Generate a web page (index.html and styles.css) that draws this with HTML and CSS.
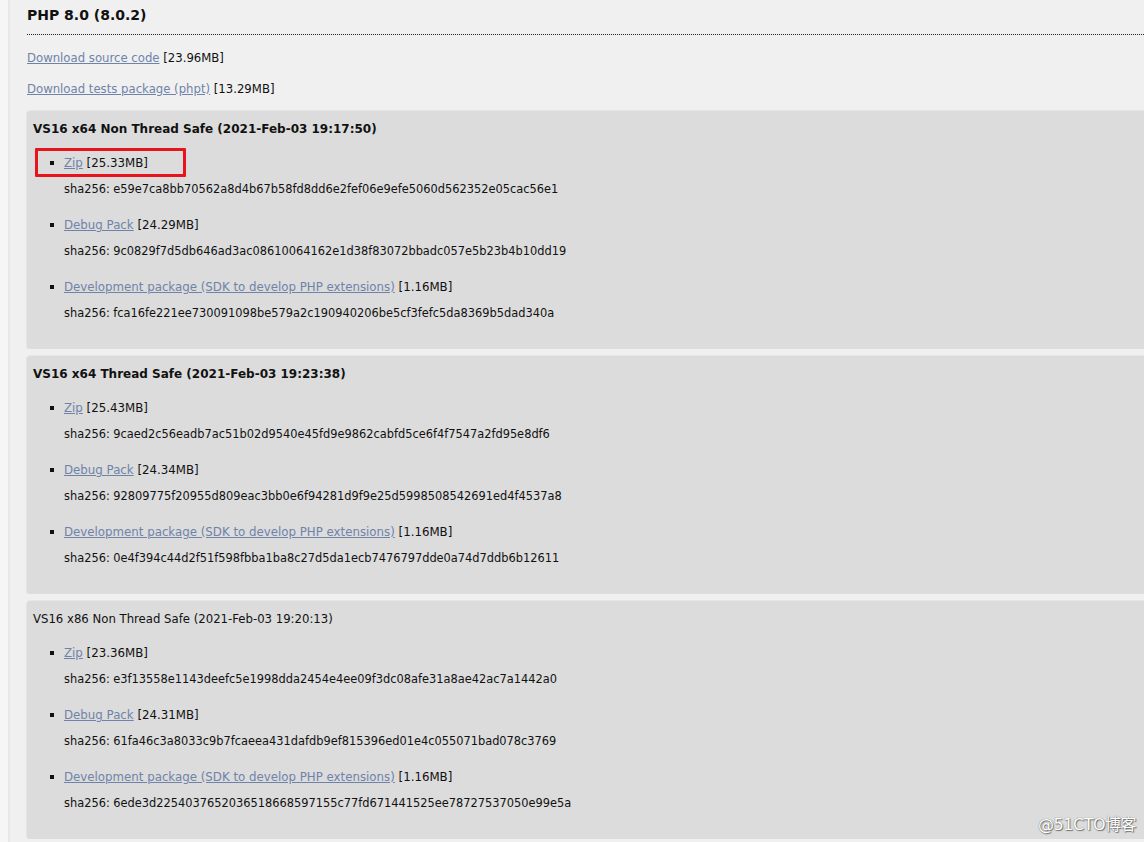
FILE: index.html
```html
<!DOCTYPE html>
<html>
<head>
<meta charset="utf-8">
<link rel="stylesheet" href="styles.css">
</head>
<body>
<div class="page">
  <h3 class="title">PHP 8.0 (8.0.2)</h3>
  <p class="dl"><a href="#">Download source code</a> [23.96MB]</p>
  <p class="dl"><a href="#">Download tests package (phpt)</a> [13.29MB]</p>

  <div class="box">
    <h4 class="box-title">VS16 x64 Non Thread Safe (2021-Feb-03 19:17:50)</h4>
    <ul class="items">
      <li class="item"><span class="mark"></span><a href="#">Zip</a> [25.33MB]
        <p class="sha">sha256: e59e7ca8bb70562a8d4b67b58fd8dd6e2fef06e9efe5060d562352e05cac56e1</p></li>
      <li class="item"><a href="#">Debug Pack</a> [24.29MB]
        <p class="sha">sha256: 9c0829f7d5db646ad3ac08610064162e1d38f83072bbadc057e5b23b4b10dd19</p></li>
      <li class="item"><a href="#">Development package (SDK to develop PHP extensions)</a> [1.16MB]
        <p class="sha">sha256: fca16fe221ee730091098be579a2c190940206be5cf3fefc5da8369b5dad340a</p></li>
    </ul>
  </div>

  <div class="box">
    <h4 class="box-title">VS16 x64 Thread Safe (2021-Feb-03 19:23:38)</h4>
    <ul class="items">
      <li class="item"><a href="#">Zip</a> [25.43MB]
        <p class="sha">sha256: 9caed2c56eadb7ac51b02d9540e45fd9e9862cabfd5ce6f4f7547a2fd95e8df6</p></li>
      <li class="item"><a href="#">Debug Pack</a> [24.34MB]
        <p class="sha">sha256: 92809775f20955d809eac3bb0e6f94281d9f9e25d5998508542691ed4f4537a8</p></li>
      <li class="item"><a href="#">Development package (SDK to develop PHP extensions)</a> [1.16MB]
        <p class="sha">sha256: 0e4f394c44d2f51f598fbba1ba8c27d5da1ecb7476797dde0a74d7ddb6b12611</p></li>
    </ul>
  </div>

  <div class="box">
    <h4 class="box-title plain">VS16 x86 Non Thread Safe (2021-Feb-03 19:20:13)</h4>
    <ul class="items">
      <li class="item"><a href="#">Zip</a> [23.36MB]
        <p class="sha">sha256: e3f13558e1143deefc5e1998dda2454e4ee09f3dc08afe31a8ae42ac7a1442a0</p></li>
      <li class="item"><a href="#">Debug Pack</a> [24.31MB]
        <p class="sha">sha256: 61fa46c3a8033c9b7fcaeea431dafdb9ef815396ed01e4c055071bad078c3769</p></li>
      <li class="item"><a href="#">Development package (SDK to develop PHP extensions)</a> [1.16MB]
        <p class="sha">sha256: 6ede3d2254037652036518668597155c77fd671441525ee78727537050e99e5a</p></li>
    </ul>
  </div>
</div>
<div class="watermark">@51CTO博客</div>
</body>
</html>
```

FILE: styles.css
```css
html, body {
  margin: 0;
  padding: 0;
  height: 100%;
  overflow: hidden;
}
body {
  background: #f0f0f0;
  font-family: "DejaVu Sans", Verdana, sans-serif;
  font-size: 11.4px;
  line-height: 16px;
  color: #111;
  position: relative;
  border-left: 8px solid #f6f6f6;
  box-shadow: inset 2px 0 0 #e8e8e8;
}
.page {
  padding: 6px 0 0 19px;
  margin-right: -30px;
}
.title {
  margin: 0;
  font-size: 14px;
  font-weight: bold;
  line-height: 18px;
  padding-bottom: 10px;
  border-bottom: 1px dotted #222;
  color: #111;
}
.dl {
  margin: 0;
  padding-top: 15px;
  font-size: 11.7px;
}
a {
  color: #6f83a9;
  text-decoration: underline;
}
.box {
  background: #dcdcdc;
  border-radius: 3px;
  margin-top: 14px;
  padding: 10px 0 28px 6px;
  box-shadow: 0 -1px 0 #e6e6e6, -1px 0 0 #e4e4e4;
}
.box + .box {
  margin-top: 7px;
}
.box-title {
  margin: 0;
  font-size: 12px;
  font-weight: bold;
  line-height: 16px;
}
.box-title.plain {
  font-weight: normal;
  font-size: 11.7px;
}
.items {
  list-style: none;
  margin: 18px 0 0;
  padding: 0 0 0 31px;
}
.item {
  position: relative;
  margin-top: 20px;
  font-size: 11.8px;
}
.item:first-child {
  margin-top: 0;
}
.item::before {
  content: "";
  position: absolute;
  left: -14px;
  top: 6px;
  width: 4px;
  height: 4px;
  background: #111;
}
.sha {
  margin: 10px 0 0;
  font-size: 11.4px;
}
.mark {
  position: absolute;
  left: -29px;
  top: -7px;
  width: 145px;
  height: 23px;
  border: 3px solid #e8141b;
  border-radius: 1px;
}
.watermark {
  position: absolute;
  right: 8px;
  bottom: 9px;
  font-family: "DejaVu Sans", "Noto Sans CJK SC", sans-serif;
  font-size: 16px;
  color: #fff;
  text-shadow: 0 0 1px #555, 1px 1px 1px #777;
  letter-spacing: -0.5px;
}
```
